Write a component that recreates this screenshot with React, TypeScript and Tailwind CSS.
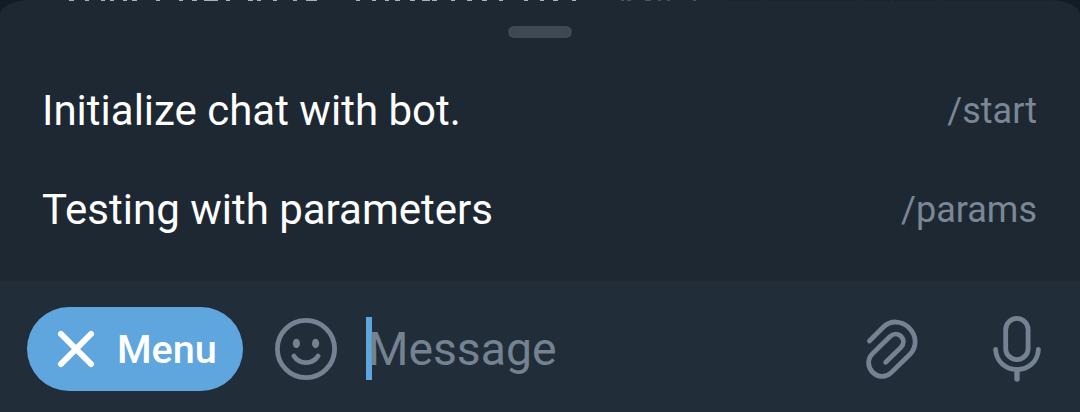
const commands = [
  { label: 'Initialize chat with bot.', command: '/start' },
  { label: 'Testing with parameters', command: '/params' },
];

// Bottom slivers of the chat line hidden behind the sheet: [x, width]
const slivers = [
  [69, 5], [85, 4], [101, 4], [110, 4], [123, 4], [132, 5], [156, 4], [179, 4], [192, 5],
  [204, 14], [226, 4], [248, 5], [257, 4], [273, 4], [293, 4], [306, 11], [356, 4],
  [372, 4], [385, 4], [395, 5], [410, 5], [422, 8], [432, 5], [451, 4], [467, 5],
  [482, 5], [499, 4], [524, 4], [540, 4], [553, 5], [572, 4],
];
const faintSlivers = [[621, 3], [627, 4], [645, 6], [658, 3], [667, 3], [693, 3]];

function ChatEdge() {
  return (
    <svg className="absolute left-0 top-0" width="1080" height="1" viewBox="0 0 1080 1" aria-hidden="true">
      {slivers.map(([x, w]) => (
        <rect key={x} x={x} width={w} height="1" fill="#a8b1b7" />
      ))}
      {faintSlivers.map(([x, w]) => (
        <rect key={x} x={x} width={w} height="1" fill="#46525e" />
      ))}
      <path d="M727 .5h32M766 .5h92M865 .5h6M874 .5h16M894 .5h43M943 .5h107" stroke="#17222d" />
    </svg>
  );
}

function CloseIcon() {
  return (
    <svg width="38" height="38" viewBox="0 0 38 38" fill="none" stroke="#fff" strokeWidth="5.8" strokeLinecap="round">
      <path d="M3.9 3.9 34.1 34.1M34.1 3.9 3.9 34.1" />
    </svg>
  );
}

function SmileIcon() {
  return (
    <svg width="62" height="62" viewBox="0 0 62 62" fill="none" stroke="#748291" strokeWidth="4.8">
      <circle cx="31" cy="31" r="28.6" />
      <path d="M18.9 38C24.5 46.8 37.5 46.8 43.1 38" strokeLinecap="round" />
      <ellipse cx="21.4" cy="25.5" rx="3.6" ry="4.7" fill="#748291" stroke="none" />
      <ellipse cx="40.6" cy="25.5" rx="3.6" ry="4.7" fill="#748291" stroke="none" />
    </svg>
  );
}

function ClipIcon() {
  return (
    <svg width="90" height="100" viewBox="0 0 90 100" fill="none" stroke="#748291" strokeWidth="4.8" strokeLinecap="round" strokeLinejoin="round">
      <path d="M19.4 41 33.2 27.2C40.6 20 51.2 20.6 58.4 27.2C67 35.2 67.2 46.8 60 54.3L41.2 72.6C35.6 78 27.6 77.3 22.6 72.2C17.6 67.1 17.1 59.3 22.3 53.9L39.5 37C43.5 33.1 48 33.3 51 36.3C54.2 39.5 54.3 44 50.7 47.6L35.7 62.3" />
    </svg>
  );
}

function MicIcon() {
  return (
    <svg width="48" height="68" viewBox="0 0 48 68" fill="none" stroke="#748291" strokeWidth="4.8" strokeLinecap="round">
      <rect x="12.7" y="3.4" width="22.4" height="41.2" rx="11.2" />
      <path d="M2.6 34.5C3.2 46.5 12.5 54.600 24 54.600S44.800 46.500 45.400 34.500" />
      <path d="M24 55v9" strokeWidth="5.400" />
    </svg>
  );
}

export default function App() {
  return (
    <div className="relative flex h-[412px] w-[1080px] flex-col overflow-hidden bg-[#111c26] font-['Roboto',sans-serif]">
      <section className="flex h-[281px] shrink-0 flex-col rounded-t-[30px_15px] bg-[#1e2833]">
        <div className="mx-auto mt-[26px] h-3 w-16 shrink-0 rounded-full bg-[#3f4853]" />
        <ul className="mt-[23px] flex flex-col pl-[42px] pr-[43px]">
          {commands.map(({ label, command }) => (
            <li key={command} className="flex h-[99px] items-center justify-between whitespace-nowrap">
              <span className="text-[42px] leading-[50px] text-white">{label}</span>
              <span className="text-[36px] leading-[50px] text-[#7a8794]">{command}</span>
            </li>
          ))}
        </ul>
      </section>
      <footer className="flex h-[131px] shrink-0 items-center bg-[#222d3a] pl-[27px]">
        <button className="mt-[5px] flex h-[84px] w-[216px] shrink-0 items-center rounded-full bg-[#5fa6de] pl-[30px]">
          <CloseIcon />
          <span className="ml-[22px] mt-[2px] text-[39.6px] font-medium leading-[50px] text-white">Menu</span>
        </button>
        <button className="ml-8 mt-[5px] shrink-0">
          <SmileIcon />
        </button>
        <div className="ml-[29px] mt-[4px] flex h-[63px] w-[484px] shrink-0 items-center">
          <span className="h-[63px] w-[6px] shrink-0 bg-[#5fa6de]" />
          <span className="-ml-1 text-[46.3px] leading-[60px] text-[#748291]">Message</span>
        </div>
        <button className="mt-[6px] shrink-0">
          <ClipIcon />
        </button>
        <button className="ml-[53px] mt-[5px] shrink-0">
          <MicIcon />
        </button>
      </footer>
      <ChatEdge />
    </div>
  );
}
